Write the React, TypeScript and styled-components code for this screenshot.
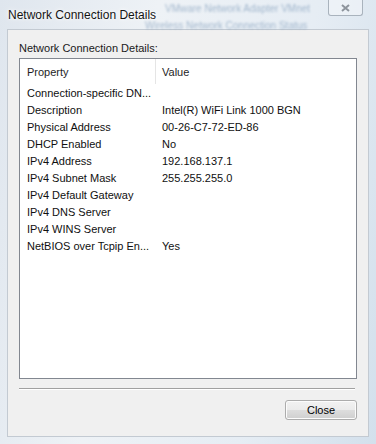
import React from 'react';
import styled, { createGlobalStyle } from 'styled-components';

const Global = createGlobalStyle`
  html, body { margin: 0; padding: 0; }
  body { font-family: "Liberation Sans", Arial, sans-serif; }
`;

const Frame = styled.div`
  position: relative;
  width: 376px;
  height: 444px;
  box-sizing: border-box;
  overflow: hidden;
  display: flex;
  flex-direction: column;
  padding: 0 7px 7px 7px;
  background: linear-gradient(100deg, #dfe6ee 0%, #eef2f6 35%, #e6edf4 70%, #d3e0ec 100%);
`;

// blurred window behind the glass
const Ghost = styled.div`
  position: absolute;
  left: 165px;
  top: 3px;
  font-size: 10px;
  line-height: 11px;
  color: #5b7fa6;
  filter: blur(1.2px);
  opacity: 0.5;
  white-space: nowrap;
  pointer-events: none;
`;

const GhostLine = styled.div<{ $indent: number }>`
  margin-left: ${(p) => p.$indent}px;
  margin-bottom: 6px;
`;

const TitleBar = styled.div`
  position: relative;
  height: 29px;
  display: flex;
  align-items: flex-start;
  justify-content: space-between;
`;

const Title = styled.div`
  margin-top: 8px;
  margin-left: 1px;
  font-size: 12px;
  color: #141414;
  text-shadow: 0 0 6px #fff, 0 0 3px #fff;
`;

const CloseCaption = styled.div`
  width: 35px;
  height: 16px;
  margin-right: 6px;
  box-sizing: border-box;
  border: 1px solid #a9b3bd;
  border-top: none;
  border-radius: 0 0 3px 3px;
  background: rgba(255, 255, 255, 0.35);
  display: flex;
  align-items: center;
  justify-content: center;
`;

const Client = styled.div`
  flex: 1;
  background: #f0f0f0;
  border: 1px solid #c3cad2;
  display: flex;
  flex-direction: column;
  padding: 12px 11px 16px 11px;
`;

const Label = styled.div`
  font-size: 11px;
  color: #1a1a1a;
  height: 16px;
`;

const ListBox = styled.div`
  height: 321px;
  box-sizing: border-box;
  border: 1px solid #828790;
  background: #fff;
  display: flex;
  flex-direction: column;
`;

const Header = styled.div`
  height: 25px;
  display: grid;
  grid-template-columns: 135px 1fr;
  font-size: 11px;
  color: #1e1e1e;
`;

const HeaderCell = styled.div<{ $divider?: boolean }>`
  display: flex;
  align-items: center;
  padding-left: ${(p) => (p.$divider ? '6px' : '7px')};
  border-left: ${(p) => (p.$divider ? '1px solid #e5e5e5' : 'none')};
`;

const Row = styled.div`
  height: 17px;
  display: grid;
  grid-template-columns: 135px 1fr;
  align-items: center;
  font-size: 11px;
  color: #101010;
`;

const Cell = styled.div`
  padding-left: 7px;
  white-space: nowrap;
  overflow: hidden;
`;

const Etched = styled.div`
  margin-top: 9px;
  height: 1px;
  margin-right: 2px;
  background: #a0a0a0;
  border-bottom: 1px solid #fff;
`;

const Footer = styled.div`
  display: flex;
  justify-content: flex-end;
  margin-top: 10px;
`;

const Button = styled.button`
  width: 72px;
  height: 20px;
  box-sizing: border-box;
  border: 1px solid #acacac;
  border-radius: 3px;
  background: linear-gradient(#f2f2f2 0%, #ebebeb 50%, #dddddd 51%, #cfcfcf 100%);
  box-shadow: inset 0 0 0 1px #fcfcfc;
  font-family: "Liberation Sans", Arial, sans-serif;
  font-size: 11px;
  color: #000;
  padding: 0;
`;

const rows: [string, string][] = [
  ['Connection-specific DN...', ''],
  ['Description', 'Intel(R) WiFi Link 1000 BGN'],
  ['Physical Address', '00-26-C7-72-ED-86'],
  ['DHCP Enabled', 'No'],
  ['IPv4 Address', '192.168.137.1'],
  ['IPv4 Subnet Mask', '255.255.255.0'],
  ['IPv4 Default Gateway', ''],
  ['IPv4 DNS Server', ''],
  ['IPv4 WINS Server', ''],
  ['NetBIOS over Tcpip En...', 'Yes'],
];

export default function App() {
  return (
    <>
      <Global />
      <Frame>
        <Ghost>
          <GhostLine $indent={0}>VMware Network Adapter VMnet</GhostLine>
          <GhostLine $indent={-20}>Wireless Network Connection Status</GhostLine>
        </Ghost>
        <TitleBar>
          <Title>Network Connection Details</Title>
          <CloseCaption>
            <svg width="9" height="8" viewBox="0 0 9 8">
              <path d="M1 1 L8 7 M8 1 L1 7" stroke="#8d949c" strokeWidth="2" />
            </svg>
          </CloseCaption>
        </TitleBar>
        <Client>
          <Label>Network Connection Details:</Label>
          <ListBox>
            <Header>
              <HeaderCell>Property</HeaderCell>
              <HeaderCell $divider>Value</HeaderCell>
            </Header>
            {rows.map(([k, v]) => (
              <Row key={k}>
                <Cell>{k}</Cell>
                <Cell>{v}</Cell>
              </Row>
            ))}
          </ListBox>
          <Etched />
          <Footer>
            <Button>Close</Button>
          </Footer>
        </Client>
      </Frame>
    </>
  );
}
